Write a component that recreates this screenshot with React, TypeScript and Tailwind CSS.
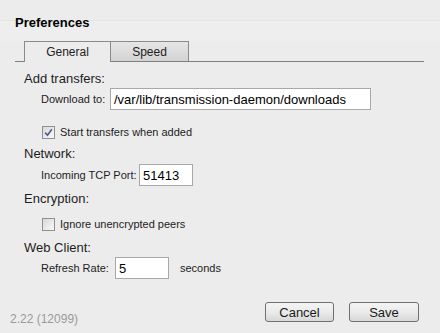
import React from 'react';

const Checkbox: React.FC<{ checked?: boolean }> = ({ checked }) => (
  <span className="w-[13px] h-[13px] shrink-0 border border-[#8e8f8f] bg-gradient-to-br from-[#d8d8d8] to-[#fafafa] flex items-center justify-center">
    {checked && (
      <svg width="9" height="9" viewBox="0 0 9 9">
        <path d="M1.2 4.6 L3.5 7.2 L7.8 1.2" fill="none" stroke="#4b5d8c" strokeWidth="1.6" />
      </svg>
    )}
  </span>
);

const TextInput: React.FC<{ value: string; width: string }> = ({ value, width }) => (
  <div className={`${width} h-[22px] bg-white border border-[#a8a8a8] pl-[3px] flex items-center text-[13px] text-black leading-none`}>
    {value}
  </div>
);

const Section: React.FC<{ title: string; className?: string; children: React.ReactNode }> = ({ title, className, children }) => (
  <div className={className}>
    <div className="text-[13px] leading-[16px] text-[#1c1c1c]">{title}</div>
    {children}
  </div>
);

const Button: React.FC<{ label: string; width: string }> = ({ label, width }) => (
  <button className={`${width} h-[20px] border border-[#707070] rounded-[3px] bg-gradient-to-b from-[#f4f4f4] via-[#ebebeb] to-[#d8d8d8] text-[13px] leading-none text-[#1a1a1a] flex items-center justify-center`}>
    {label}
  </button>
);

export default function App() {
  return (
    <div className="w-[440px] h-[333px] bg-[#ececec] flex flex-col overflow-hidden font-['Liberation_Sans',Arial,sans-serif]">
      <div className="h-[20px]" />
      <div className="h-[21px] border-t border-[#e3e3e3] bg-[#eeeeee] px-[15px]">
        <h1 className="-mt-[6px] text-[13px] font-bold leading-[16px] text-black">Preferences</h1>
      </div>

      {/* tabs */}
      <div className="mx-[15px] w-[409px] h-[21px] border-b border-[#808080] flex pl-[9px]">
        <div className="w-[87px] h-[21px] -mb-px border-t border-l border-r border-[#8a8a8a] bg-[#ececec] flex items-center justify-center text-[12px] text-[#222]">
          General
        </div>
        <div className="w-[78px] h-[20px] border-t border-r border-[#8a8a8a] bg-gradient-to-b from-[#e6e6e6] to-[#d3d3d3] flex items-center justify-center text-[12px] text-[#222]">
          Speed
        </div>
      </div>

      <div className="pl-[24px] text-[#1c1c1c]">
        <Section title="Add transfers:" className="mt-[9px]">
          <div className="mt-[1px] pl-[17px] flex items-center">
            <span className="w-[69px] text-[11px]">Download to:</span>
            <TextInput value="/var/lib/transmission-daemon/downloads" width="w-[261px]" />
          </div>
          <label className="mt-[16px] pl-[18px] flex items-center gap-[5px] text-[11px] leading-[13px]">
            <Checkbox checked />
            Start transfers when added
          </label>
        </Section>

        <Section title="Network:" className="mt-[7px]">
          <div className="mt-[2px] pl-[17px] flex items-center">
            <span className="w-[98px] text-[11px]">Incoming TCP Port:</span>
            <TextInput value="51413" width="w-[54px]" />
          </div>
        </Section>

        <Section title="Encryption:" className="mt-[5px]">
          <label className="mt-[11px] pl-[18px] flex items-center gap-[5px] text-[11px] leading-[13px]">
            <Checkbox />
            Ignore unencrypted peers
          </label>
        </Section>

        <Section title="Web Client:" className="mt-[9px]">
          <div className="mt-[1px] pl-[17px] flex items-center">
            <span className="w-[74px] text-[11px]">Refresh Rate:</span>
            <TextInput value="5" width="w-[54px]" />
            <span className="ml-[11px] text-[11px]">seconds</span>
          </div>
        </Section>
      </div>

      <div className="mt-[23px] pl-[10px] pr-[21px] flex items-start">
        <span className="mt-[10px] text-[12px] leading-[14px] text-[#9a9a9a]">2.22 (12099)</span>
        <div className="ml-auto flex gap-[15px]">
          <Button label="Cancel" width="w-[69px]" />
          <Button label="Save" width="w-[70px]" />
        </div>
      </div>
    </div>
  );
}
